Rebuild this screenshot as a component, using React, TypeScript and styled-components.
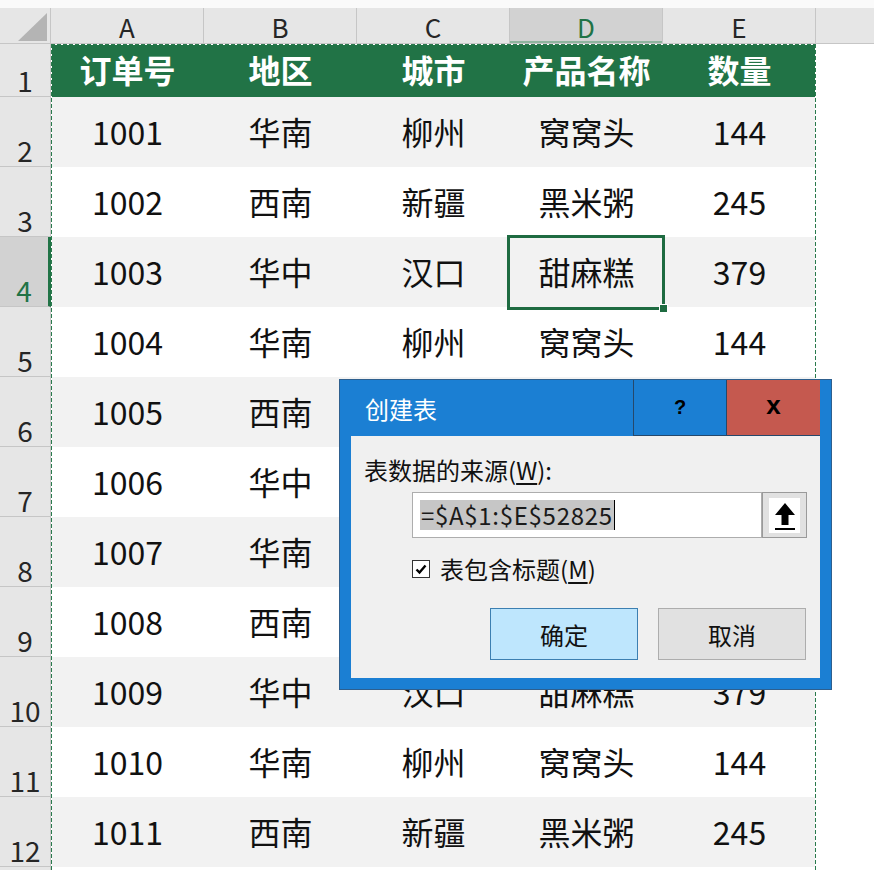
import React from "react";
import styled, { createGlobalStyle, css } from "styled-components";

const GlobalStyle = createGlobalStyle`
  html, body { margin: 0; padding: 0; background: #fafafa; overflow: hidden; }
  body { font-family: "Noto Sans CJK SC", "Noto Sans", sans-serif; }
  #root { width: 874px; height: 870px; }
`;

const COLS = "51px repeat(5, 153px) 1fr";
const GREEN = "#217346";

const Page = styled.div`
  position: relative;
  width: 874px;
  height: 870px;
  overflow: hidden;
  padding-top: 8px;
  box-sizing: border-box;
  background: #fafafa;
`;

const ColHeaderRow = styled.div`
  display: grid;
  grid-template-columns: ${COLS};
  height: 36px;
  box-sizing: border-box;
  background: #e6e6e6;
  border-bottom: 1px solid #c6c6c6;
`;

const Corner = styled.div`
  position: relative;
  border-right: 1px solid #c6c6c6;
`;

const CornerTriangle = styled.svg`
  position: absolute;
  left: 0;
  top: 0;
`;

const ColHeader = styled.div<{ $active?: boolean }>`
  display: flex;
  align-items: center;
  justify-content: center;
  box-sizing: border-box;
  padding-top: 2px;
  border-right: 1px solid #c6c6c6;
  font-size: 26px;
  line-height: 1;
  color: #262626;
  ${(p) =>
    p.$active &&
    css`
      background: #d2d2d2;
      color: ${GREEN};
      box-shadow: inset 0 -2px 0 #8fb49e;
    `}
`;

const Filler = styled.div``;

const Grid = styled.div`
  position: relative;
`;

const Row = styled.div<{ $h: number }>`
  display: grid;
  grid-template-columns: ${COLS};
  height: ${(p) => p.$h}px;
`;

const RowHeader = styled.div<{ $active?: boolean }>`
  display: flex;
  align-items: flex-end;
  justify-content: center;
  box-sizing: border-box;
  padding-bottom: 2px;
  background: #e6e6e6;
  border-right: 1px solid #c6c6c6;
  border-bottom: 1px solid #c6c6c6;
  font-size: 28px;
  line-height: 1;
  color: #262626;
  ${(p) =>
    p.$active &&
    css`
      background: #d2d2d2;
      color: ${GREEN};
      border-right: 3px solid ${GREEN};
    `}
`;

const Cell = styled.div<{ $kind: "head" | "band" | "plain" }>`
  position: relative;
  display: flex;
  align-items: center;
  justify-content: center;
  padding-bottom: 3px;
  box-sizing: border-box;
  font-size: 32px;
  line-height: 1;
  color: #111;
  background: ${(p) => (p.$kind === "head" ? GREEN : p.$kind === "band" ? "#f2f2f2" : "#ffffff")};
  ${(p) =>
    p.$kind === "head" &&
    css`
      color: #fff;
      font-weight: 700;
    `}
`;

const Blank = styled.div`
  background: #fff;
`;

const Selection = styled.div`
  position: absolute;
  z-index: 3;
  left: -3px;
  top: -2px;
  right: -2px;
  bottom: -3px;
  border: 3px solid #1e6b41;
  box-sizing: border-box;
  pointer-events: none;
  &::after {
    content: "";
    position: absolute;
    right: -6px;
    bottom: -6px;
    width: 7px;
    height: 7px;
    background: #1e6b41;
    border: 1px solid #fff;
  }
`;

const dash = (dir: string) =>
  `repeating-linear-gradient(${dir}, #2a7a4d 0 4px, #ffffff 4px 6px)`;

const Ants = styled.div`
  position: absolute;
  z-index: 2;
  left: 51px;
  top: 0;
  width: 765px;
  bottom: -20px;
  pointer-events: none;
  background:
    ${dash("to bottom")} left top / 1px 100% no-repeat,
    ${dash("to bottom")} right top / 1px 100% no-repeat,
    ${dash("to right")} left top / 100% 1px no-repeat;
`;

/* Dialog */
const Dialog = styled.div`
  position: absolute;
  z-index: 5;
  left: 339px;
  top: 379px;
  width: 493px;
  height: 311px;
  box-sizing: border-box;
  background: #1b7fd3;
  border: 1px solid #2e5f8e;
  padding: 0 11px 11px;
  display: flex;
  flex-direction: column;
`;

const TitleBar = styled.div`
  display: flex;
  height: 56px;
  flex: none;
`;

const Title = styled.div`
  flex: 1;
  display: flex;
  align-items: center;
  padding-left: 14px;
  color: #fff;
  font-size: 24px;
`;

const TitleButton = styled.div<{ $variant: "help" | "close" }>`
  width: ${(p) => (p.$variant === "help" ? 94 : 93)}px;
  box-sizing: border-box;
  display: flex;
  align-items: center;
  justify-content: center;
  color: #000;
  font-family: "Liberation Sans", Arial, sans-serif;
  font-weight: 700;
  border-bottom: 1px solid #25486b;
  ${(p) =>
    p.$variant === "help"
      ? css`
          background: #1b7fd3;
          border-left: 1px solid #25486b;
          border-right: 1px solid #25486b;
          font-size: 20px;
        `
      : css`
          background: #c5594f;
          font-size: 26px;
          padding-bottom: 4px;
        `}
`;

const DialogBody = styled.div`
  flex: 1;
  background: #f0f0f0;
  padding: 20px 13px 0;
  display: flex;
  flex-direction: column;
  color: #111;
  font-size: 24px;
`;

const Label = styled.div`
  line-height: 28px;
  height: 28px;
  u {
    text-underline-offset: 3px;
  }
`;

const InputRow = styled.div`
  margin: 8px 0 0 48px;
  display: flex;
  height: 46px;
`;

const Input = styled.div`
  width: 351px;
  box-sizing: border-box;
  border: 1px solid #adadad;
  background: #fff;
  padding-left: 7px;
  display: flex;
  align-items: center;
`;

const SelectedText = styled.span`
  background: #c6c6c6;
  line-height: 30px;
  height: 30px;
  padding: 0 1px;
  font-size: 24px;
  letter-spacing: 0.7px;
  color: #1a1a1a;
`;

const Caret = styled.span`
  width: 1px;
  height: 30px;
  background: #000;
`;

const UpButton = styled.div`
  width: 45px;
  box-sizing: border-box;
  border: 1px solid #9a9a9a;
  background: #e1e1e1;
  display: flex;
  align-items: center;
  justify-content: center;
`;

const CheckRow = styled.div`
  margin: 17px 0 0 48px;
  height: 28px;
  display: flex;
  align-items: center;
  gap: 10px;
  line-height: 28px;
  u {
    text-underline-offset: 3px;
  }
`;

const CheckBox = styled.div`
  width: 18px;
  height: 18px;
  box-sizing: border-box;
  border: 1px solid #333;
  background: #fff;
  display: flex;
  align-items: center;
  justify-content: center;
`;

const ButtonRow = styled.div`
  margin-top: 25px;
  display: flex;
  justify-content: flex-end;
  gap: 20px;
  padding-right: 1px;
`;

const DialogButton = styled.div<{ $primary?: boolean }>`
  width: 148px;
  height: 52px;
  box-sizing: border-box;
  display: flex;
  align-items: center;
  justify-content: center;
  font-size: 24px;
  color: #111;
  background: ${(p) => (p.$primary ? "#bee6fd" : "#e1e1e1")};
  border: 1px solid ${(p) => (p.$primary ? "#3c7fb1" : "#adadad")};
`;

type Rec = [string, string, string, string, string];

const data: Rec[] = [
  ["1001", "华南", "柳州", "窝窝头", "144"],
  ["1002", "西南", "新疆", "黑米粥", "245"],
  ["1003", "华中", "汉口", "甜麻糕", "379"],
  ["1004", "华南", "柳州", "窝窝头", "144"],
  ["1005", "西南", "新疆", "黑米粥", "245"],
  ["1006", "华中", "汉口", "甜麻糕", "379"],
  ["1007", "华南", "柳州", "窝窝头", "144"],
  ["1008", "西南", "新疆", "黑米粥", "245"],
  ["1009", "华中", "汉口", "甜麻糕", "379"],
  ["1010", "华南", "柳州", "窝窝头", "144"],
  ["1011", "西南", "新疆", "黑米粥", "245"],
  ["1012", "华中", "汉口", "甜麻糕", "379"],
];

const headers = ["订单号", "地区", "城市", "产品名称", "数量"];
const letters = ["A", "B", "C", "D", "E"];

export default function App() {
  return (
    <Page>
      <GlobalStyle />
      <ColHeaderRow>
        <Corner>
          <CornerTriangle width="50" height="35" viewBox="0 0 50 35">
            <polygon points="18,33 47,33 47,5" fill="#b4b4b4" />
          </CornerTriangle>
        </Corner>
        {letters.map((l) => (
          <ColHeader key={l} $active={l === "D"}>
            {l}
          </ColHeader>
        ))}
        <Filler />
      </ColHeaderRow>

      <Grid>
        <Row $h={53}>
          <RowHeader>1</RowHeader>
          {headers.map((h) => (
            <Cell key={h} $kind="head">
              {h}
            </Cell>
          ))}
          <Blank />
        </Row>
        {data.map((r, i) => {
          const rowNum = i + 2;
          const band = rowNum % 2 === 0;
          return (
            <Row key={rowNum} $h={70}>
              <RowHeader $active={rowNum === 4}>{rowNum}</RowHeader>
              {r.map((v, j) => (
                <Cell key={j} $kind={band ? "band" : "plain"}>
                  {v}
                  {rowNum === 4 && j === 3 && <Selection />}
                </Cell>
              ))}
              <Blank />
            </Row>
          );
        })}
        <Ants />
      </Grid>

      <Dialog>
        <TitleBar>
          <Title>创建表</Title>
          <TitleButton $variant="help">?</TitleButton>
          <TitleButton $variant="close">x</TitleButton>
        </TitleBar>
        <DialogBody>
          <Label>
            表数据的来源(<u>W</u>):
          </Label>
          <InputRow>
            <Input>
              <SelectedText>=$A$1:$E$52825</SelectedText>
              <Caret />
            </Input>
            <UpButton>
              <svg width="31" height="35" viewBox="0 0 31 35">
                <rect x="0" y="0" width="31" height="35" fill="#fff" />
                <polygon points="16,5 26,17 19.5,17 19.5,27 12.5,27 12.5,17 6,17" fill="#000" />
                <rect x="6" y="30" width="20" height="2" fill="#000" />
              </svg>
            </UpButton>
          </InputRow>
          <CheckRow>
            <CheckBox>
              <svg width="14" height="14" viewBox="0 0 14 14">
                <path d="M2.5 7.5 L5.5 10.5 L11.5 3.5" stroke="#000" strokeWidth="2.4" fill="none" />
              </svg>
            </CheckBox>
            <span>
              表包含标题(<u>M</u>)
            </span>
          </CheckRow>
          <ButtonRow>
            <DialogButton $primary>确定</DialogButton>
            <DialogButton>取消</DialogButton>
          </ButtonRow>
        </DialogBody>
      </Dialog>
    </Page>
  );
}
